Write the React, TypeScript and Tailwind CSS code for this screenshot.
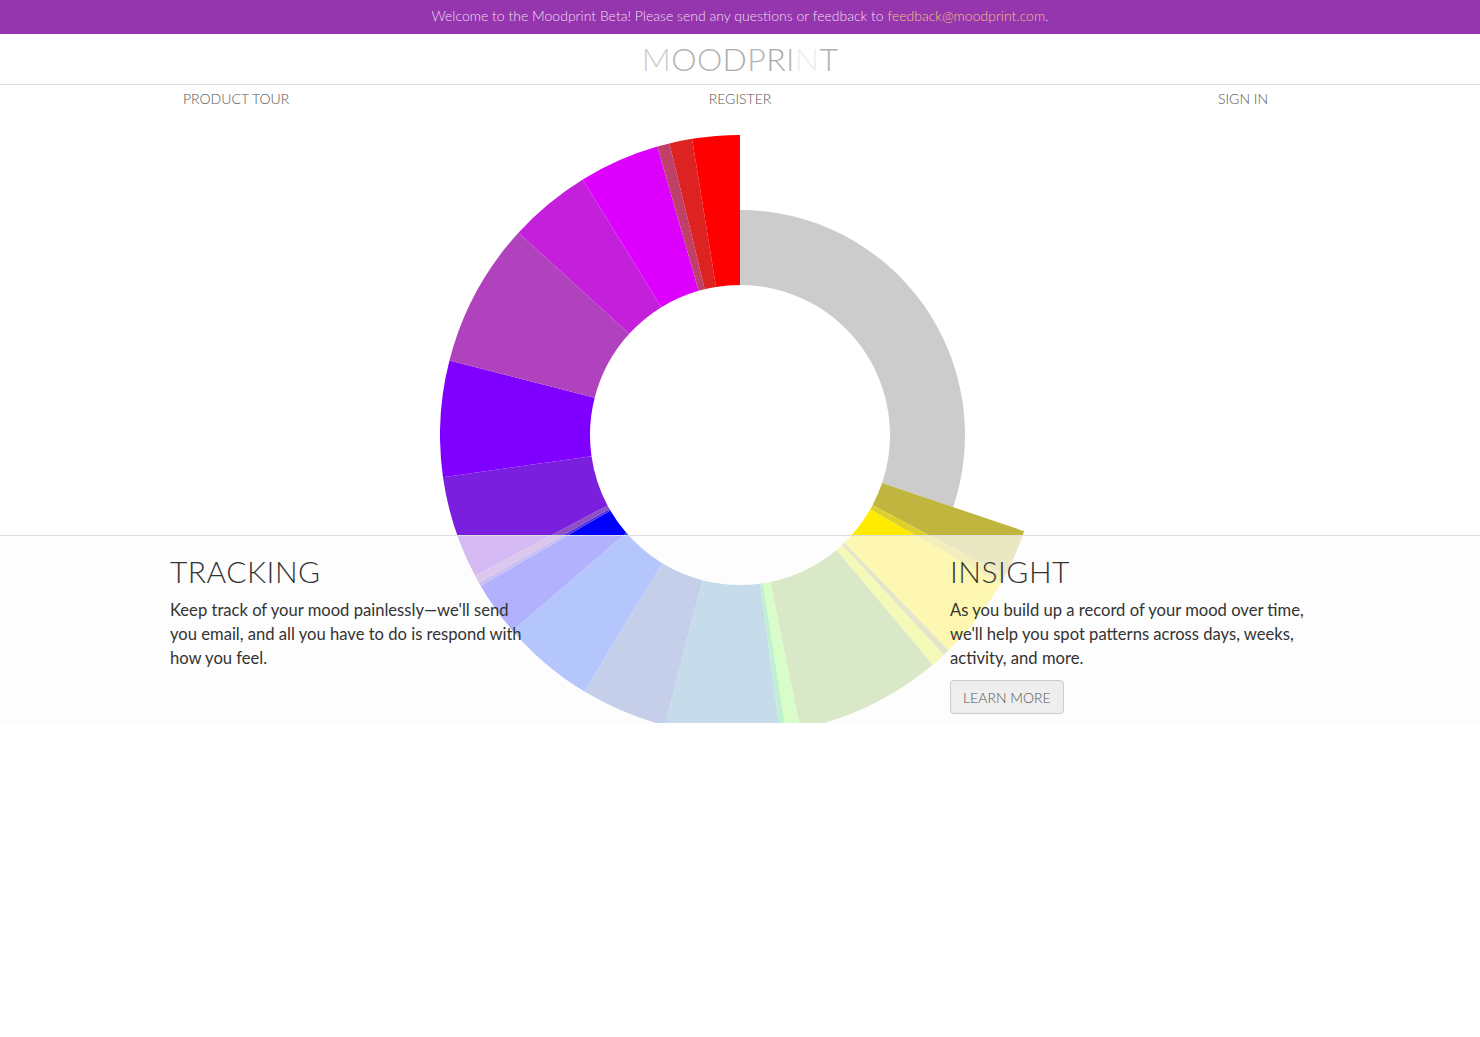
import React from 'react';

type Seg = { a0: number; a1: number; r: number; color: string };

// mood wheel slices, angles in degrees clockwise from 12 o'clock
const slices: Seg[] = [
  { a0: 0, a1: 108.7, r: 225, color: '#cccccc' },
  { a0: 108.7, a1: 117.9, r: 300, color: '#c0b53e' },
  { a0: 117.9, a1: 119.8, r: 300, color: '#ddd02a' },
  { a0: 119.8, a1: 135.9, r: 300, color: '#ffeb00' },
  { a0: 135.9, a1: 137.2, r: 300, color: '#a9b34f' },
  { a0: 137.2, a1: 140, r: 300, color: '#e4f219' },
  { a0: 140, a1: 168.4, r: 300, color: '#87bd4f' },
  { a0: 168.4, a1: 171.2, r: 300, color: '#87ff4e' },
  { a0: 171.2, a1: 172.3, r: 300, color: '#31d469' },
  { a0: 172.3, a1: 194.5, r: 300, color: '#4891c0' },
  { a0: 194.5, a1: 211.2, r: 300, color: '#4866c0' },
  { a0: 211.2, a1: 229.3, r: 300, color: '#1048ff' },
  { a0: 229.3, a1: 239.8, r: 300, color: '#0000ff' },
  { a0: 239.8, a1: 240.5, r: 300, color: '#5030e0' },
  { a0: 240.5, a1: 242, r: 300, color: '#8c4fc6' },
  { a0: 242, a1: 261.9, r: 300, color: '#7b1fdf' },
  { a0: 261.9, a1: 284.4, r: 300, color: '#8000ff' },
  { a0: 284.4, a1: 312.4, r: 300, color: '#b042bd' },
  { a0: 312.4, a1: 328.4, r: 300, color: '#c420dc' },
  { a0: 328.4, a1: 344, r: 300, color: '#dd00ff' },
  { a0: 344, a1: 346.4, r: 300, color: '#c0406a' },
  { a0: 346.4, a1: 350.8, r: 300, color: '#dd2222' },
  { a0: 350.8, a1: 360, r: 300, color: '#ff0000' },
];

const INNER = 150;

function arc(s: Seg) {
  const pt = (a: number, r: number) => {
    const t = (a * Math.PI) / 180;
    return `${(300 + r * Math.sin(t)).toFixed(2)} ${(300 - r * Math.cos(t)).toFixed(2)}`;
  };
  const large = s.a1 - s.a0 > 180 ? 1 : 0;
  return `M ${pt(s.a0, s.r)} A ${s.r} ${s.r} 0 ${large} 1 ${pt(s.a1, s.r)} L ${pt(s.a1, INNER)} A ${INNER} ${INNER} 0 ${large} 0 ${pt(s.a0, INNER)} Z`;
}

function MoodWheel() {
  return (
    <svg width="600" height="600" viewBox="0 0 600 600" className="block mx-auto">
      {slices.map((s, i) => (
        <path key={i} d={arc(s)} fill={s.color} />
      ))}
    </svg>
  );
}

const logo = [
  { c: 'M', color: 'text-[#cccccc]' },
  { c: 'O', color: 'text-[#b4b4b4]' },
  { c: 'O', color: 'text-[#b4b4b4]' },
  { c: 'D', color: 'text-[#adadad]' },
  { c: 'P', color: 'text-[#b4b4b4]' },
  { c: 'R', color: 'text-[#a8a8a8]' },
  { c: 'I', color: 'text-[#b4b4b4]' },
  { c: 'N', color: 'text-[#ececec]' },
  { c: 'T', color: 'text-[#b0b0b0]' },
];

export default function App() {
  return (
    <div className="min-h-screen bg-white font-['Lato','Open_Sans',sans-serif] text-[#333]">
      <div className="h-[34px] bg-[#9536ae] flex items-center justify-center pb-[3px] text-[14px] font-light text-[#ecdff0]">
        Welcome to the Moodprint Beta! Please send any questions or feedback to&nbsp;
        <a className="text-[#eec27e]">feedback@moodprint.com</a>.
      </div>

      <div className="h-[51px] border-b border-[#dddddd] flex items-center justify-center">
        <h1 className="text-[32px] font-light tracking-[0.4px] leading-none">
          {logo.map((l, i) => (
            <span key={i} className={l.color}>{l.c}</span>
          ))}
        </h1>
      </div>

      <div className="relative h-[638px] overflow-hidden">
        <nav className="mx-auto w-[1114px] grid grid-cols-[1fr_auto_1fr] h-[28px] pb-[2px] items-center text-[14px] font-light text-[#555] uppercase">
          <a className="justify-self-start">Product Tour</a>
          <a>Register</a>
          <a className="justify-self-end pr-[29px]">Sign In</a>
        </nav>

        <div className="mt-[22px]">
          <MoodWheel />
        </div>

        <div className="absolute left-0 right-0 bottom-0 h-[188px] border-t border-[#dddddd] bg-[#fcfcfc]/70">
          <div className="mx-auto w-[1170px] grid grid-cols-3 pt-[19px]">
            <div className="px-[15px]">
              <h2 className="text-[30px] font-light leading-[33px] tracking-[0.5px] text-[#333]">TRACKING</h2>
              <p className="mt-[10px] text-[16.6px] leading-[24px] text-[#333]">
                Keep track of your mood painlessly—we'll send you email, and all you have to do is respond with how you feel.
              </p>
            </div>
            <div />
            <div className="px-[15px]">
              <h2 className="text-[30px] font-light leading-[33px] tracking-[0.5px] text-[#333]">INSIGHT</h2>
              <p className="mt-[10px] text-[16.6px] leading-[24px] text-[#333]">
                As you build up a record of your mood over time, we'll help you spot patterns across days, weeks, activity, and more.
              </p>
              <button className="mt-[10px] h-[34px] px-[12px] rounded-[4px] border border-[#cccccc] bg-[#eeeeee] text-[14px] font-light uppercase text-[#555]">
                Learn More
              </button>
            </div>
          </div>
        </div>
      </div>
    </div>
  );
}
